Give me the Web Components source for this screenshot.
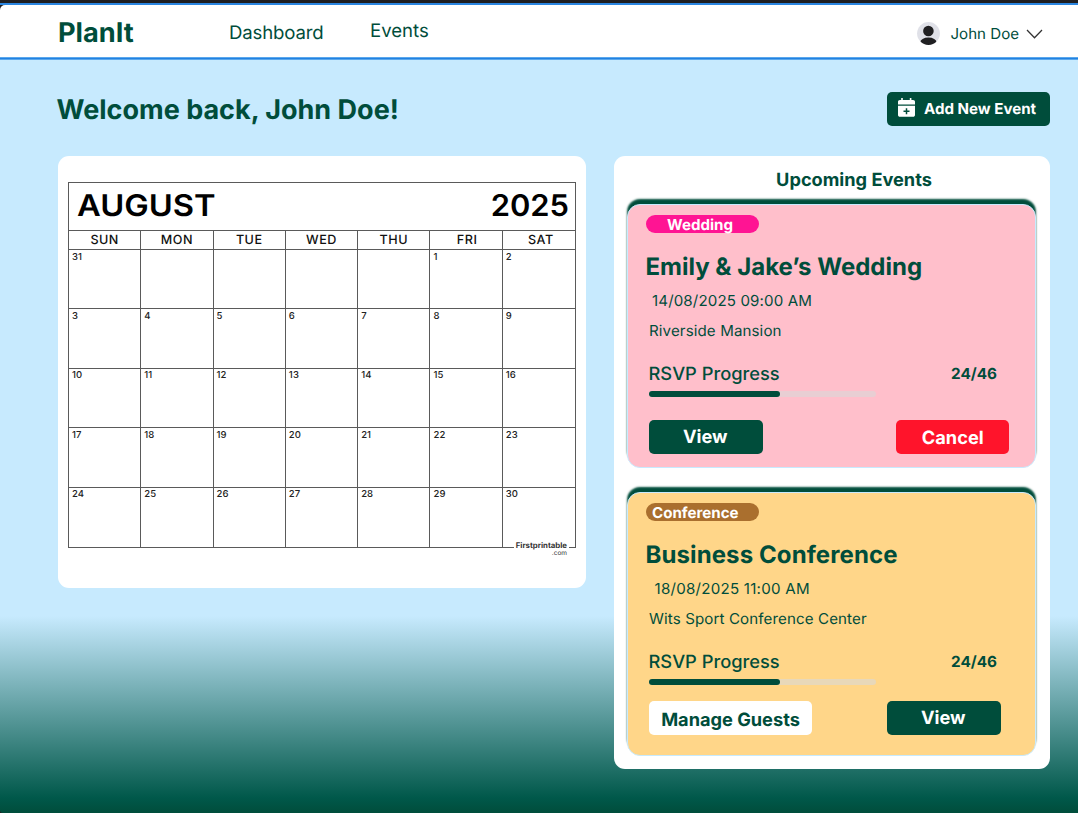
<!DOCTYPE html>
<html lang="en"><head><meta charset="utf-8"><title>PlanIt</title>
<style>
html,body{margin:0;height:100%}
body{font-family:Inter,"Liberation Sans",sans-serif;color:#004d3b;overflow:hidden;background:#1f1f21;text-rendering:geometricPrecision}
</style></head><body>
<planit-page></planit-page>
<script>
const define=(name,html)=>customElements.define(name,class extends HTMLElement{
  connectedCallback(){
    if(this.shadowRoot)return;
    const t=document.createElement('template');
    t.innerHTML=typeof html==='function'?html(this):html;
    this.attachShadow({mode:'open'}).append(t.content.cloneNode(true));
  }
});

define('plan-header',`<style>
:host{display:block;box-sizing:border-box;height:57px;padding-top:3px;background:#1f1f21}
.edge{height:2px;background:#2b86e0}
.bar{box-sizing:border-box;height:52px;background:#fff;border-top-left-radius:5px;display:flex;align-items:flex-start;padding:0 35px 0 58px;white-space:nowrap}
.logo{font-weight:700;font-size:27.200px;line-height:34px;margin-top:11px;width:171px}
a{font-size:18.6px;line-height:24px;letter-spacing:-.02px}
.dash{margin-top:16px;width:141px;letter-spacing:-.15px}.ev{margin-top:14px;flex:1}
.user{display:flex;align-items:center;margin-top:16px;font-size:15.1px;line-height:25px}
svg{display:block}.av{margin-right:11px}.ch{margin-left:7px}
</style>
<div class="edge"></div><div class="bar"><div class="logo">PlanIt</div><a class="dash">Dashboard</a><a class="ev">Events</a>
<div class="user"><svg class="av" width="23" height="23" viewBox="0 0 23 23"><defs><clipPath id="c"><circle cx="11.5" cy="11.5" r="11.4"/></clipPath></defs><circle cx="11.5" cy="11.5" r="11.4" fill="#e0e1e8"/><g clip-path="url(#c)" fill="#202022"><circle cx="11.4" cy="9" r="5.3"/><ellipse cx="11.4" cy="20.5" rx="8.2" ry="5"/></g></svg><span>John Doe</span>
<svg class="ch" width="17" height="10" viewBox="0 0 17 10"><path d="M1 1 8.5 8.8 16 1" fill="none" stroke="#333" stroke-width="1.25"/></svg></div></div>`);

define('add-button',`<style>
:host{display:flex;box-sizing:border-box;width:163px;height:33.5px;background:#004d3b;border-radius:5px;color:#fff;font-weight:700;font-size:15.1px;align-items:center;padding-left:11px;white-space:nowrap}
svg{margin:-3px 9px 0 0;flex:none}
</style><svg width="17" height="19" viewBox="0 0 17 19"><path fill="#fff" d="M3.2 0h1.6v2h7V0h1.6v2h1.7c1.1 0 1.9.8 1.9 1.8V6.500H0V3.800C0 2.800.8 2 1.900 2h1.300zM0 7.700h17v9.200c0 1-.8 1.800-1.900 1.800H1.900C.8 18.700 0 17.900 0 16.900z"/><path d="M8.500 10.200v6M5.500 13.200h6" stroke="#004d3b" stroke-width="1.500"/></svg><slot></slot>`);

define('month-calendar',()=>{
  const days=['SUN','MON','TUE','WED','THU','FRI','SAT'];
  let cells='';
  for(let i=0;i<35;i++){const n=i===0?31:i<5?'':i-4;cells+=`<div class="cell">${n}</div>`}
  return `<style>
:host{display:block;box-sizing:border-box;width:528px;height:432px;padding:26px 10px;background:#fff;border-radius:11px;color:#111}
.grid{position:relative;box-sizing:border-box;width:508px;height:366px;border:1px solid #5a5a5a;display:grid;grid-template-rows:48px 19px 1fr}
.title{display:flex;justify-content:space-between;align-items:center;padding:0 6px 1px 8px;font-weight:600;font-size:30px;color:#000;border-bottom:1px solid #5a5a5a;box-sizing:border-box}
.title span{display:inline-block;transform:scaleX(1.09);transform-origin:0 50%}
.title .year{transform:scaleX(1.03);transform-origin:100% 50%}
.week,.days{display:grid;grid-template-columns:repeat(7,1fr)}
.week div{font-size:12.600px;font-weight:500;text-align:center;line-height:19px;height:19px;letter-spacing:.5px;border-right:1px solid #5a5a5a;border-bottom:1px solid #5a5a5a;box-sizing:border-box}
.days{grid-template-rows:repeat(5,1fr)}
.cell{font-size:9.500px;font-weight:500;line-height:12px;padding:1.500px 0 0 3px;letter-spacing:.1px;color:#222;border-right:1px solid #5a5a5a;border-bottom:1px solid #5a5a5a;box-sizing:border-box}
.week div:last-child,.cell:nth-child(7n){border-right:0}.cell:nth-child(n+29){border-bottom:0}
.week div:nth-child(n+6){padding-left:2px}.week div:last-child{padding-left:4px}
.mark{position:absolute;right:6px;bottom:-8px;background:#fff;padding:0 2px;font-size:7.800px;line-height:9px;font-weight:700;text-align:right;color:#333}
.mark small{display:block;font-size:6.500px;line-height:8px;height:6px;margin-top:-1px;font-weight:400}
</style><div class="grid"><div class="title"><span>AUGUST</span><span class="year">2025</span></div><div class="week">${days.map(d=>`<div>${d}</div>`).join('')}</div><div class="days">${cells}</div><div class="mark">Firstprintable<small>.com</small></div></div>`});

define('rsvp-progress',`<style>
:host{display:block}
.row{display:flex;justify-content:space-between;align-items:center;height:26px;margin:0 38px 0 20.500px}
.l{font-size:18.3px;font-weight:500;padding-top:1px}.n{font-size:15.300px;font-weight:700;margin-top:1px}
.track{width:227px;height:6px;margin:5px 0 0 21px;border-radius:3px;background:rgba(217,217,217,.6)}
.fill{width:131px;height:6px;border-radius:3px;background:#004d3b}
</style><div class="row"><span class="l">RSVP Progress</span><span class="n"><slot></slot></span></div><div class="track"><div class="fill"></div></div>`);

define('event-button',`<style>
:host{display:block;box-sizing:border-box;width:113.500px;height:33.500px;border-radius:5px;background:#004d3b;color:#fff;font-size:18.200px;font-weight:700;line-height:34px;text-align:center;white-space:nowrap;padding-right:1px}
:host([kind=cancel]){background:#ff142b;padding:1px 0 0 1px}
:host([kind=manage]){background:#fff;color:#004d3b;width:163px;padding:2px 0 0}
</style><slot></slot>`);

define('event-card',`<style>
:host{display:block;box-sizing:border-box;width:409px;height:264px;border:1px solid #c7eafe;border-radius:13px;background:var(--card);box-shadow:0 -5px 2px 0 #004d3b;white-space:nowrap}
.tag{box-sizing:border-box;width:113px;height:18px;margin:10px 0 0 18px;padding-left:var(--tag-pad);border-radius:9px;background:var(--tag);color:#fff;font-size:15.100px;line-height:19px;font-weight:700}
h2{margin:17px 0 0 17.500px;font-size:24px;line-height:34px;font-weight:700;letter-spacing:var(--title-sp,0)}
.date{margin:8px 0 0 var(--date-x);font-size:15.100px;line-height:18px;letter-spacing:var(--date-sp)}
.place{margin:12px 0 0 21px;font-size:15.100px;line-height:18px;letter-spacing:.12px}
rsvp-progress{margin-top:20px}
.actions{display:flex;justify-content:space-between;margin:var(--act-m)}
</style><div class="tag"><slot name="tag"></slot></div><h2><slot name="title"></slot></h2><div class="date"><slot name="date"></slot></div><div class="place"><slot name="place"></slot></div><rsvp-progress>24/46</rsvp-progress><div class="actions"><slot></slot></div>`);

define('upcoming-events',`<style>
:host{display:block;box-sizing:border-box;width:436px;height:613px;padding:12px 14px 0 13px;background:#fff;border-radius:11px}
h3{margin:0 0 12px 45px;text-align:center;font-size:18.200px;line-height:24px;font-weight:700}
event-card+event-card{margin-top:24px}
.wed{--card:#ffbfcb;--tag:#ff1493;--tag-pad:21px;--date-x:24px;--date-sp:.13px;--act-m:23px 26px 0 21px}
.conf{--card:#ffd689;--tag:#aa6f2e;--tag-pad:6px;--date-x:26.500px;--date-sp:.25px;--title-sp:.1px;--act-m:16px 34.500px 0 21px}
</style><h3>Upcoming Events</h3>
<event-card class="wed"><span slot="tag">Wedding</span><span slot="title">Emily &amp; Jake’s Wedding</span><span slot="date">14/08/2025 09:00 AM</span><span slot="place">Riverside Mansion</span><event-button>View</event-button><event-button kind="cancel">Cancel</event-button></event-card>
<event-card class="conf"><span slot="tag">Conference</span><span slot="title">Business Conference</span><span slot="date">18/08/2025 11:00 AM</span><span slot="place">Wits Sport Conference Center</span><event-button kind="manage">Manage Guests</event-button><event-button>View</event-button></event-card>`);

define('planit-page',`<style>
:host{display:block;width:1078px;height:813px}
.line{height:3px;background:linear-gradient(#5aa8ec 0 1px,#2181e2 1px 2px,#5aa8ec 2px)}
main{box-sizing:border-box;height:753px;border-bottom-left-radius:3px;padding:32px 28px 0 58px;background:linear-gradient(#c7eafe 0 556px,#00584a 738px,#004d3b 753px)}
.top{display:flex;justify-content:space-between;height:64px}
h1{margin:0 0 0 -1.500px;font-size:27px;line-height:35px;font-weight:700}
.cols{display:flex;justify-content:space-between;align-items:flex-start}
</style><plan-header></plan-header><div class="line"></div><main><div class="top"><h1>Welcome back, John Doe!</h1><add-button>Add New Event</add-button></div><div class="cols"><month-calendar></month-calendar><upcoming-events></upcoming-events></div></main>`);
</script></body></html>
